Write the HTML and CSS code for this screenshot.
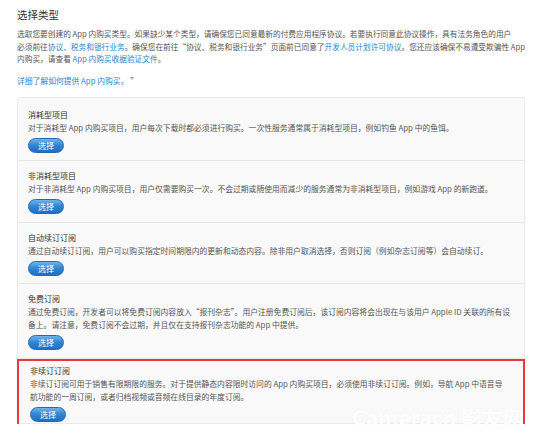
FILE: index.html
```html
<!DOCTYPE html>
<html lang="zh-CN">
<head>
    <meta charset="UTF-8">
    <meta name="viewport" content="width=device-width, initial-scale=1.0">
    <title>选择类型</title>
    <link rel="stylesheet" href="styles.css">
</head>
<body>

<div class="page">
    <h1 class="titulo">选择类型</h1>

    <p class="intro">
        选取您要创建的 App 内购买类型。如果缺少某个类型，请确保您已同意最新的付费应用程序协议。若要执行同意此协议操作，具有法务角色的用户<br>
        必须前往<a href="#">协议、税务和银行业务</a>。确保您在前往“协议、税务和银行业务”页面前已同意了<a href="#">开发人员计划许可协议</a>。您还应该确保不易遭受欺骗性 App<br>
        内购买，请查看 <a href="#">App 内购买收据验证文件</a>。
    </p>

    <p class="saiba"><a href="#">详细了解如何提供 App 内购买。</a> ”</p>

    <div class="painel">
        <div class="tipo">
            <div class="tipo-nome">消耗型项目</div>
            <div class="tipo-desc">对于消耗型 App 内购买项目，用户每次下载时都必须进行购买。一次性服务通常属于消耗型项目，例如钓鱼 App 中的鱼饵。</div>
            <button class="btn-escolher">选择</button>
        </div>
        <div class="tipo">
            <div class="tipo-nome">非消耗型项目</div>
            <div class="tipo-desc">对于非消耗型 App 内购买项目，用户仅需要购买一次。不会过期或随使用而减少的服务通常为非消耗型项目，例如游戏 App 的新跑道。</div>
            <button class="btn-escolher">选择</button>
        </div>
        <div class="tipo">
            <div class="tipo-nome">自动续订订阅</div>
            <div class="tipo-desc">通过自动续订订阅，用户可以购买指定时间期限内的更新和动态内容。除非用户取消选择，否则订阅（例如杂志订阅等）会自动续订。</div>
            <button class="btn-escolher">选择</button>
        </div>
        <div class="tipo">
            <div class="tipo-nome">免费订阅</div>
            <div class="tipo-desc">通过免费订阅，开发者可以将免费订阅内容放入“报刊杂志”。用户注册免费订阅后，该订阅内容将会出现在与该用户 Apple ID 关联的所有设<br>备上。请注意，免费订阅不会过期，并且仅在支持报刊杂志功能的 App 中提供。</div>
            <button class="btn-escolher">选择</button>
        </div>
        <div class="tipo destaque">
            <div class="tipo-nome">非续订订阅</div>
            <div class="tipo-desc">非续订订阅可用于销售有限期限的服务。对于提供静态内容限时访问的 App 内购买项目，必须使用非续订订阅。例如，导航 App 中语音导<br>航功能的一周订阅，或者归档视频或音频在线目录的年度订阅。</div>
            <button class="btn-escolher">选择</button>
        </div>
    </div>

    <div class="marca">Cameracn 影友网</div>
</div>

</body>
</html>
```

FILE: styles.css
```css
body {
    font-family: "Noto Sans CJK SC", "Noto Sans", sans-serif;
    background-color: #fff;
    color: #555;
    margin: 0;
}
.page {
    position: relative;
    padding: 8px 0 0 17px;
    width: 508px;
    height: 429px;
    overflow: hidden;
}
a {
    color: #1d86d0;
    text-decoration: none;
}
.titulo {
    font-size: 10.5px;
    line-height: 13px;
    font-weight: normal;
    color: #333;
    margin: 0;
}
.intro {
    font-size: 7.7px;
    line-height: 12.5px;
    margin: 7px 0 0;
    white-space: nowrap;
}
.saiba {
    font-size: 7.8px;
    line-height: 13px;
    margin: 8px 0 0;
}
.painel {
    margin-top: 10px;
    background-color: #f9f9f9;
    border: 1px solid #ebebeb;
    border-radius: 2px;
    padding-top: 2px;
}
.tipo {
    padding: 8px 10px 7.5px;
    border-bottom: 1px solid #e6e6e6;
}
.tipo:last-child {
    border-bottom: none;
}
.tipo-nome {
    font-size: 8px;
    line-height: 13px;
    color: #333;
}
.tipo-desc {
    font-size: 7.8px;
    line-height: 13px;
    color: #555;
    white-space: nowrap;
}
.btn-escolher {
    display: block;
    margin-top: 4px;
    width: 36px;
    height: 15px;
    padding: 0;
    border: 1px solid #2468b4;
    border-radius: 8px;
    background: linear-gradient(#6fb3ea, #2f84d4 50%, #1f6fc2);
    color: #fff;
    font-family: inherit;
    font-size: 8px;
    line-height: 13px;
    cursor: pointer;
}
.destaque {
    margin: 0 -1px -1px;
    padding: 3px 11px 2px;
    border: 2px solid #e83a3a;
}
.marca {
    position: absolute;
    left: 352px;
    top: 402px;
    font-size: 21px;
    font-weight: bold;
    color: #fff;
    text-shadow: 0 0 1px rgba(0, 0, 0, 0.07);
    white-space: nowrap;
}
```
